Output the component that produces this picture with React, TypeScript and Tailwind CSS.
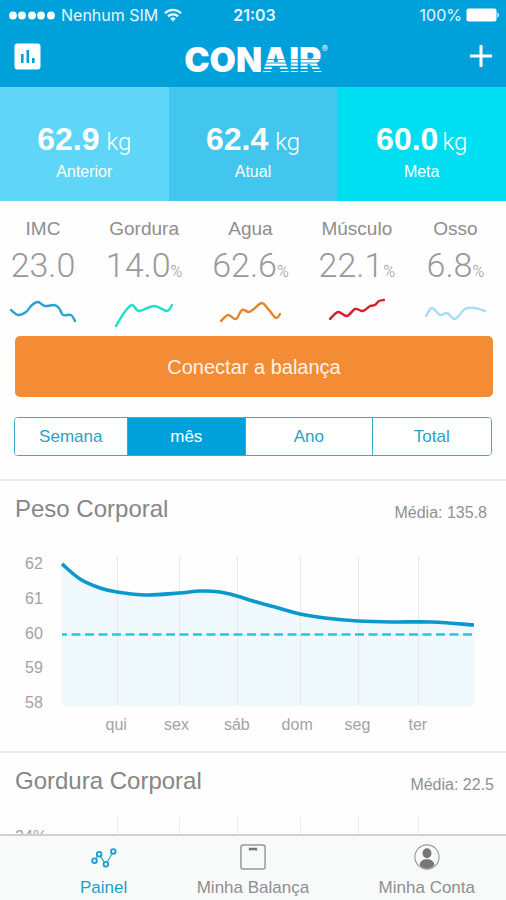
import clsx from "clsx";

type Point = [number, number];

// Catmull-Rom spline through the points, written as cubic beziers
function smoothPath(points: Point[]) {
  let d = `M${points[0][0]} ${points[0][1]}`;
  for (let i = 0; i < points.length - 1; i++) {
    const p0 = points[i - 1] ?? points[i];
    const p1 = points[i];
    const p2 = points[i + 1];
    const p3 = points[i + 2] ?? p2;
    d += ` C${p1[0] + (p2[0] - p0[0]) / 6} ${p1[1] + (p2[1] - p0[1]) / 6}`;
    d += ` ${p2[0] - (p3[0] - p1[0]) / 6} ${p2[1] - (p3[1] - p1[1]) / 6}`;
    d += ` ${p2[0]} ${p2[1]}`;
  }
  return d;
}

const weights = [
  { label: "Anterior", value: "62.9", color: "bg-[#5fd6f7]", gap: "gap-[7px]" },
  { label: "Atual", value: "62.4", color: "bg-[#42c6ed]", gap: "gap-[7px]" },
  { label: "Meta", value: "60.0", color: "bg-[#00def2]", gap: "gap-1" },
];

const metrics: {
  label: string;
  value: string;
  unit?: string;
  color: string;
  width: number;
  points: Point[];
}[] = [
  {
    label: "IMC",
    value: "23.0",
    color: "#2aa3cf",
    width: 66,
    points: [[1, 14], [8, 19], [16, 16], [22, 9], [28, 6], [35, 10], [44, 9], [49, 12], [53, 19], [61, 19], [65, 25]],
  },
  {
    label: "Gordura",
    value: "14.0",
    unit: "%",
    color: "#1fe0c8",
    width: 58,
    points: [[1, 30], [9, 17], [17, 9], [24, 15], [39, 10], [52, 15], [57, 9]],
  },
  {
    label: "Agua",
    value: "62.6",
    unit: "%",
    color: "#e5842c",
    width: 61,
    points: [[1, 25], [8, 19], [16, 23], [22, 14], [29, 16], [35, 12], [42, 7], [49, 14], [56, 22], [60, 18]],
  },
  {
    label: "Músculo",
    value: "22.1",
    unit: "%",
    color: "#da1f2b",
    width: 56,
    points: [[1, 23], [9, 16], [18, 20], [26, 13], [34, 15], [41, 10], [46, 9], [50, 5], [55, 4]],
  },
  {
    label: "Osso",
    value: "6.8",
    unit: "%",
    color: "#a9dcf2",
    width: 61,
    points: [[1, 20], [7, 12], [15, 19], [22, 17], [30, 23], [40, 13], [50, 12], [60, 15]],
  },
];

const ranges = [
  { label: "Semana", width: "w-[112px]" },
  { label: "mês", width: "w-[119px]", active: true },
  { label: "Ano", width: "w-[127px]" },
  { label: "Total", width: "w-[120px]" },
];

const days = ["qui", "sex", "sáb", "dom", "seg", "ter"];
const gridLines = [55, 117, 175, 238, 296, 356];

const weightCurve: Point[] = [
  [0, 8], [18, 23], [38, 32], [55, 36], [84, 39], [117, 37], [138, 35], [158, 36], [175, 40],
  [191, 45], [213, 51], [238, 58], [263, 62], [296, 65], [330, 66], [370, 66], [412, 69],
];

function StatusBar() {
  return (
    <div className="grid h-[30px] grid-cols-[1fr_auto_1fr] items-center pl-[9px] pr-[6px] font-[Inter,sans-serif] text-[16px] leading-5 text-[#e6f7fd]">
      <div className="flex items-center gap-[6px]">
        <svg width="46" height="9" viewBox="0 0 46 9" fill="#fff">
          {[4, 13, 23, 32, 42].map((x) => (
            <circle key={x} cx={x} cy="4.5" r="3.9" />
          ))}
        </svg>
        <span>Nenhum SIM</span>
        <svg width="18" height="14" viewBox="0 0 18 14" fill="none" stroke="#e6f7fd" strokeWidth="2.2">
          <path d="M1 5.2a11.4 11.4 0 0 1 16 0" />
          <path d="M4 8.4a7.1 7.1 0 0 1 10 0" />
          <path d="M9 13.4 6.2 10.6a4 4 0 0 1 5.6 0Z" fill="#e6f7fd" stroke="none" />
        </svg>
      </div>
      <span className="font-semibold">21:03</span>
      <div className="flex items-center justify-end gap-1">
        <span>100%</span>
        <svg width="34" height="14" viewBox="0 0 34 14" fill="#fff">
          <rect x="0.5" y="0.5" width="30" height="13" rx="2" />
          <path d="M31.5 4.5c1.8.6 1.8 4.4 0 5Z" />
        </svg>
      </div>
    </div>
  );
}

function Logo() {
  return (
    <div className="relative flex font-[Inter,sans-serif] text-[34px] font-black leading-[34px] text-white">
      <span>CON</span>
      <span className="relative">
        AIR
        <svg
          className="absolute inset-0 h-full w-full"
          viewBox="0 0 60 34"
          preserveAspectRatio="none"
          stroke="#00a1db"
        >
          <path d="M0 16.5H60" strokeWidth="0.8" />
          <path d="M0 20H60" strokeWidth="1.2" />
          <path d="M0 23.500H60" strokeWidth="1.6" />
          <path d="M0 27H60" strokeWidth="1.8" />
        </svg>
      </span>
      <span className="absolute left-full top-0 text-[9px] font-normal leading-3">®</span>
    </div>
  );
}

function NavBar() {
  return (
    <div className="grid h-[57px] grid-cols-[1fr_auto_1fr] items-start px-[14px] pt-[13px]">
      <button type="button" aria-label="Estatísticas" className="justify-self-start">
        <svg width="27" height="27" viewBox="0 0 27 27">
          <rect x="0.5" y="0.5" width="26" height="26" rx="3" fill="#fff" />
          <path d="M8.3 11v9M13.8 7v13M19.3 15v5" stroke="#00a1db" strokeWidth="2.6" />
        </svg>
      </button>
      <Logo />
      <button type="button" aria-label="Adicionar" className="justify-self-end pt-[2px]">
        <svg width="22" height="22" viewBox="0 0 22 22" stroke="#fff" strokeWidth="3">
          <path d="M11 0v22M0 11h22" />
        </svg>
      </button>
    </div>
  );
}

function WeightCards() {
  return (
    <div className="grid grid-cols-3">
      {weights.map((w) => (
        <div key={w.label} className={clsx("flex h-[114px] flex-col items-center pt-8 text-white", w.color)}>
          <div className={clsx("flex items-baseline leading-10", w.gap)}>
            <span className="text-[32px] font-bold">{w.value}</span>
            <span className="font-[Roboto,sans-serif] text-[24px] font-light">kg</span>
          </div>
          <span className="text-[16px] leading-5">{w.label}</span>
        </div>
      ))}
    </div>
  );
}

function Metrics() {
  return (
    <div className="flex h-[135px] justify-between pl-[10px] pr-5 pt-4">
      {metrics.map((m) => (
        <div key={m.label} className="flex flex-col items-center">
          <span className="text-[19px] leading-6 text-[#8e8e8e]">{m.label}</span>
          <div className="font-[Roboto,sans-serif] font-light leading-[48px] text-[#999]">
            <span className="text-[34px]">{m.value}</span>
            {m.unit && <span className="text-[16px]">{m.unit}</span>}
          </div>
          <svg width={m.width} height="34" viewBox={`0 0 ${m.width} 34`} fill="none">
            <path d={smoothPath(m.points)} stroke={m.color} strokeWidth="2.4" strokeLinecap="round" />
          </svg>
        </div>
      ))}
    </div>
  );
}

function RangeTabs() {
  return (
    <div className="mx-[14px] mt-5 flex h-[39px] overflow-hidden rounded-[4px] border border-[#3ba9cf]">
      {ranges.map((r, i) => (
        <button
          key={r.label}
          type="button"
          aria-pressed={!!r.active}
          className={clsx(
            "grow text-[17px] leading-6",
            r.width,
            i > 0 && "border-l border-[#3ba9cf]",
            r.active ? "bg-[#00a1db] text-white" : "bg-white text-[#2b9fc9]"
          )}
        >
          {r.label}
        </button>
      ))}
    </div>
  );
}

function SectionTitle({ title, average, padding }: { title: string; average: string; padding: string }) {
  return (
    <div className={clsx("flex items-end justify-between pl-[15px]", padding)}>
      <h2 className="text-[24px] leading-8 text-[#868686]">{title}</h2>
      <span className="text-[16px] leading-6 text-[#909090]">Média: {average}</span>
    </div>
  );
}

function WeightChart() {
  const line = smoothPath(weightCurve);
  return (
    <div className="flex pl-[25px] pr-8 pt-[31px]">
      <div className="flex h-[155px] w-[37px] flex-col justify-between text-[16px] leading-4 text-[#a3a3a3]">
        {[62, 61, 60, 59, 58].map((n) => (
          <span key={n}>{n}</span>
        ))}
      </div>
      <div className="flex-1">
        <svg className="h-[150px] w-full overflow-visible" viewBox="0 0 412 150" preserveAspectRatio="none" fill="none">
          <path d={`${line} V150 H0 Z`} fill="#f0f9fd" />
          {gridLines.map((x) => (
            <path key={x} d={`M${x}.5 0V150`} stroke="#e6eaec" />
          ))}
          <path d="M0 78.5H412" stroke="#22c8dc" strokeWidth="2.4" strokeDasharray="9 4.5" strokeDashoffset="4" />
          <path d={line} stroke="#0a98cd" strokeWidth="3.6" />
        </svg>
        <div className="grid grid-cols-6 pl-6 pr-[26px] pt-[7px] text-center text-[16px] leading-6 text-[#a3a3a3]">
          {days.map((day) => (
            <span key={day}>{day}</span>
          ))}
        </div>
      </div>
    </div>
  );
}

function FatChart() {
  return (
    <div className="flex pl-[15px] pr-8 pt-5">
      <span className="w-[47px] pt-3 text-[16px] leading-4 text-[#a3a3a3]">24%</span>
      <svg className="h-[150px] flex-1" viewBox="0 0 412 150" preserveAspectRatio="none">
        {gridLines.map((x) => (
          <path key={x} d={`M${x}.5 0V150`} stroke="#ececec" />
        ))}
      </svg>
    </div>
  );
}

function TabBar() {
  return (
    <nav className="flex h-[66px] shrink-0 justify-between border-t-2 border-[#cfcfcf] bg-[#f8fafa] pl-20 pr-[31px] pt-2 text-[17px] leading-6 text-[#8f8f8f]">
      <a href="#painel" aria-current="page" className="flex flex-col items-center gap-[6px] text-[#1ba0cc]">
        <svg width="28" height="28" viewBox="0 0 28 28" fill="none" stroke="currentColor">
          <path d="M3.5 18 8.5 11 16 22 24 8" strokeWidth="1.2" />
          <g fill="#f8fafa" strokeWidth="2">
            <circle cx="3.8" cy="18" r="2.5" />
            <circle cx="8.8" cy="11" r="2.5" />
            <circle cx="16" cy="21.8" r="2.5" />
            <circle cx="24" cy="8" r="2.5" />
          </g>
        </svg>
        <span>Painel</span>
      </a>
      <a href="#balanca" className="flex flex-col items-center gap-[6px]">
        <svg width="28" height="28" viewBox="0 0 28 28" fill="none">
          <rect x="1" y="1" width="26" height="26" rx="2.5" stroke="#999" strokeWidth="1.6" />
          <path d="M9.5 4h9v3h-2c-1.5-.5-3.500-.5-5 0h-2Z" fill="#777" />
        </svg>
        <span>Minha Balança</span>
      </a>
      <a href="#conta" className="flex flex-col items-center gap-[6px]">
        <svg width="28" height="28" viewBox="0 0 28 28" fill="none">
          <circle cx="14" cy="14" r="13" stroke="#999" strokeWidth="1.2" />
          <ellipse cx="14" cy="10" rx="4.8" ry="5.4" fill="#777" />
          <path d="M6 23C6.500 18.500 9.500 16.500 14 16.500s7.500 2 8 6.500c-4 5-12 5-16 0Z" fill="#777" />
        </svg>
        <span>Minha Conta</span>
      </a>
    </nav>
  );
}

export default function App() {
  return (
    <div className="flex h-screen flex-col bg-[#fefefe] font-['Liberation_Sans',Arial,sans-serif]">
      <header className="shrink-0 bg-[#00a1db]">
        <StatusBar />
        <NavBar />
      </header>
      <main className="min-h-0 flex-1 overflow-hidden">
        <WeightCards />
        <Metrics />
        <div className="pl-[15px] pr-[13px]">
          <button type="button" className="h-[61px] w-full rounded-[5px] bg-[#f48c36] text-[20px] leading-6 text-[#fff3e6]">
            Conectar a balança
          </button>
        </div>
        <RangeTabs />
        <section className="mt-[23px] h-[272px] border-t-2 border-[#ebebeb]">
          <SectionTitle title="Peso Corporal" average="135.8" padding="pr-[19px] pt-3" />
          <WeightChart />
        </section>
        <section className="border-t-2 border-[#ebebeb]">
          <SectionTitle title="Gordura Corporal" average="22.5" padding="pr-3 pt-3" />
          <FatChart />
        </section>
      </main>
      <TabBar />
    </div>
  );
}
